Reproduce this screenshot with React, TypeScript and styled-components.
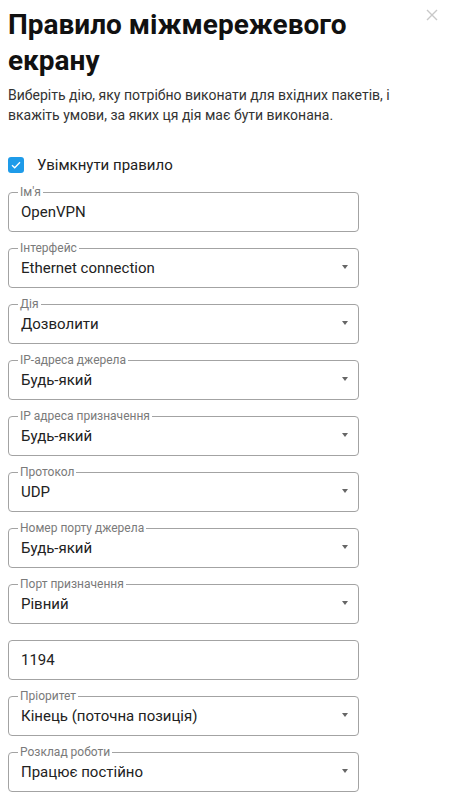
import { createGlobalStyle } from "styled-components";
import styled from "styled-components";

const GlobalStyle = createGlobalStyle`
  body {
    margin: 0;
    background: #ffffff;
    font-family: Roboto, "Noto Sans", sans-serif;
  }
`;

type Field = {
  label?: string,
  value: string,
  select?: boolean
}

const fields: Field[] = [
  { label: "Ім'я", value: "OpenVPN" },
  { label: "Інтерфейс", value: "Ethernet connection", select: true },
  { label: "Дія", value: "Дозволити", select: true },
  { label: "IP-адреса джерела", value: "Будь-який", select: true },
  { label: "IP адреса призначення", value: "Будь-який", select: true },
  { label: "Протокол", value: "UDP", select: true },
  { label: "Номер порту джерела", value: "Будь-який", select: true },
  { label: "Порт призначення", value: "Рівний", select: true },
  { value: "1194" },
  { label: "Пріоритет", value: "Кінець (поточна позиція)", select: true },
  { label: "Розклад роботи", value: "Працює постійно", select: true },
];

export default function App() {
  return (
    <Dialog>
      <GlobalStyle />
      <CloseButton aria-label="close">
        <svg width="12" height="12" viewBox="0 0 12 12">
          <path d="M1 1L11 11M11 1L1 11" stroke="#c8c8c8" strokeWidth="1.4" />
        </svg>
      </CloseButton>
      <Title>Правило міжмережевого екрану</Title>
      <Description>
        Виберіть дію, яку потрібно виконати для вхідних пакетів, і вкажіть умови, за яких ця дія має бути виконана.
      </Description>
      <CheckRow>
        <CheckBox>
          <svg width="10" height="8" viewBox="0 0 10 8">
            <path d="M1 4.2L3.7 6.8L9 1.2" stroke="#fff" strokeWidth="1.3" fill="none" />
          </svg>
        </CheckBox>
        <CheckLabel>Увімкнути правило</CheckLabel>
      </CheckRow>
      <Form>
        {fields.map((f, i) => (
          <FieldBox key={i} $bare={!f.label}>
            {f.label && <Legend>{f.label}</Legend>}
            <Value>{f.value}</Value>
            {f.select && <Arrow />}
          </FieldBox>
        ))}
      </Form>
    </Dialog>
  )
}

const Dialog = styled.div`
  position: relative;
  width: 452px;
  min-height: 803px;
  box-sizing: border-box;
  padding: 7px 8px 0 8px;
  display: flex;
  flex-direction: column;
`;

const CloseButton = styled.button`
  position: absolute;
  top: 9px;
  right: 14px;
  border: none;
  background: none;
  padding: 0;
  width: 12px;
  height: 12px;
  display: flex;
`;

const Title = styled.h1`
  margin: 0;
  padding-right: 30px;
  font-size: 28px;
  line-height: 36px;
  font-weight: 700;
  color: #111;
`;

const Description = styled.p`
  margin: 6px 0 0 0;
  font-size: 14px;
  line-height: 20px;
  color: #333;
`;

const CheckRow = styled.div`
  display: flex;
  align-items: center;
  gap: 13px;
  margin-top: 31px;
`;

const CheckBox = styled.div`
  width: 16px;
  height: 16px;
  border-radius: 3px;
  background: #1e9be9;
  display: flex;
  align-items: center;
  justify-content: center;
`;

const CheckLabel = styled.span`
  font-size: 15px;
  color: #222;
`;

const Form = styled.div`
  width: 351px;
  display: flex;
  flex-direction: column;
  gap: 9px;
  margin-top: 11px;
`;

const FieldBox = styled.fieldset<{ $bare?: boolean }>`
  position: relative;
  margin: ${p => p.$bare ? "7px 0 0 0" : "0"};
  padding: ${p => p.$bare ? "9px 12px" : "3px 12px 9px 12px"};
  border: 1px solid #a3a3a3;
  border-radius: 4px;
  min-width: 0;
`;

const Legend = styled.legend`
  margin-left: -3px;
  padding: 0 2px;
  font-size: 12px;
  line-height: 14px;
  color: #7a7a7a;
`;

const Value = styled.div`
  font-size: 15px;
  line-height: 20px;
  color: #222;
`;

const Arrow = styled.span`
  position: absolute;
  right: 10px;
  bottom: 18px;
  width: 0;
  height: 0;
  border-left: 3.5px solid transparent;
  border-right: 3.5px solid transparent;
  border-top: 4px solid #666;
`;
